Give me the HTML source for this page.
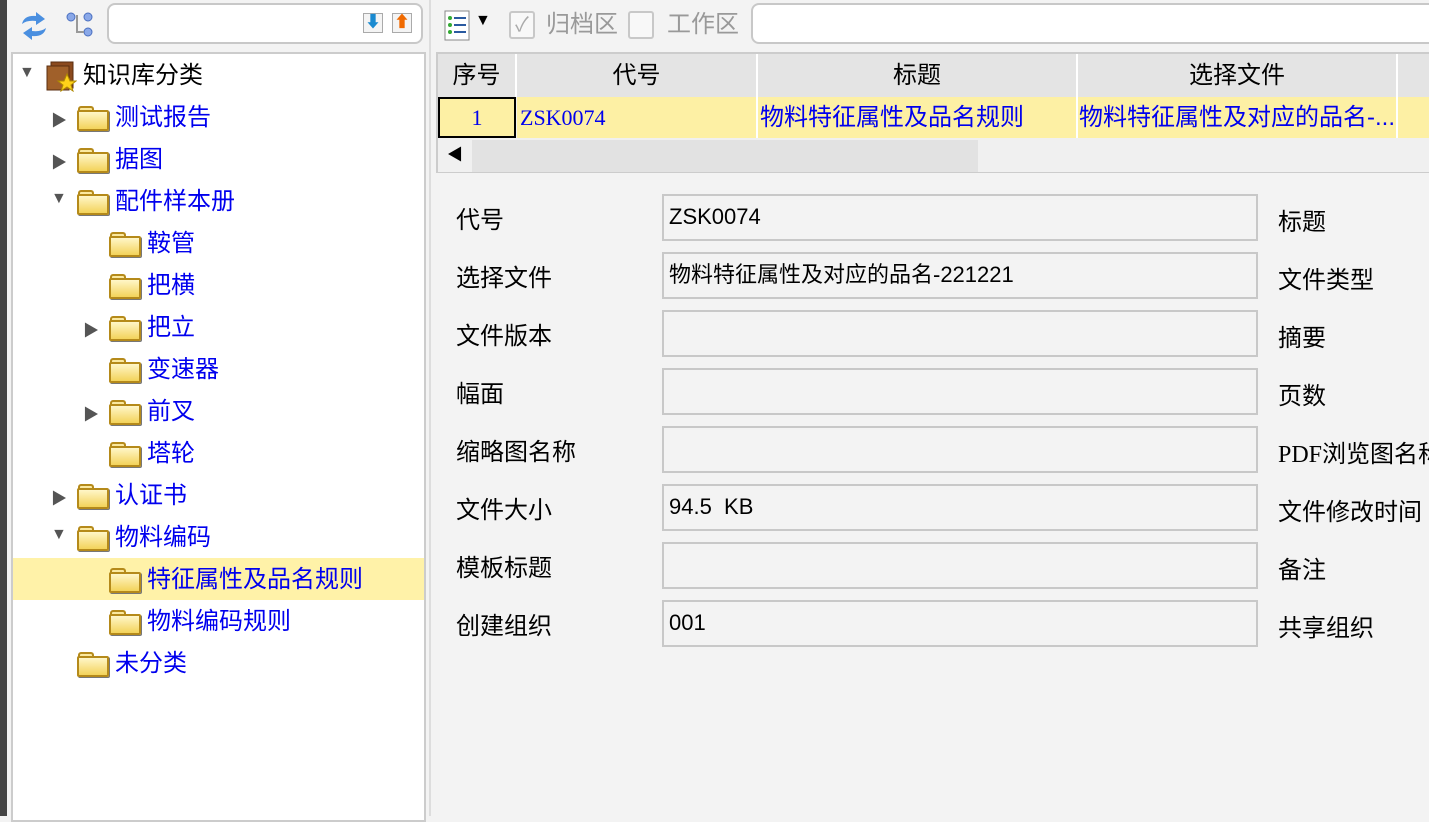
<!DOCTYPE html>
<html><head><meta charset="utf-8"><style>
*{margin:0;padding:0;box-sizing:border-box}
body{width:1429px;height:816px;overflow:hidden;background:#f3f3f3;position:relative;font-family:"Liberation Sans","WenQuanYi Zen Hei","Noto Sans CJK SC",sans-serif;font-size:24px;color:#000}
.a{position:absolute;white-space:nowrap}
.tr{position:absolute;height:42px;line-height:42px;color:#0000ee;white-space:nowrap}
.fold{display:inline-block;width:30px;height:22px;vertical-align:-3px;margin-right:8px;position:relative}
.fold:before{content:"";position:absolute;left:1px;top:0;width:12px;height:6px;border:2px solid #b58a1a;border-bottom:none;border-radius:3px 3px 0 0;background:#fbe9a0}
.fold:after{content:"";position:absolute;left:0;top:4px;width:28px;height:17px;border:2px solid #b58a1a;border-radius:2px;background:linear-gradient(#fff6c8,#f3d35a);box-shadow:1px 1px 0 #777}
.tri{position:absolute;font-size:16px;color:#555}
.lbl{position:absolute;left:456px;font-size:24px;white-space:nowrap}
.inp{position:absolute;left:662px;width:596px;height:47px;border:2px solid #c8c8c8;background:#f3f3f3;padding-left:5px;line-height:42px;font-size:22px;white-space:nowrap}
.rl{position:absolute;left:1278px;font-size:24px;white-space:nowrap}
.th{position:absolute;top:54px;height:43px;background:#e4e4e4;text-align:center;line-height:43px;border-right:2px solid #fff}
.td{position:absolute;top:97px;height:41px;background:#fdf0a4;line-height:41px;color:#0000ee;border-right:2px solid #fff;overflow:hidden;white-space:nowrap}
</style></head><body>
<div class="a" style="left:0;top:0;width:7px;height:816px;background:#444"></div>
<svg class="a" style="left:18px;top:10px" width="32" height="32" viewBox="0 0 32 32"><path d="M4 14 Q6 5 18 6 L18 2 L27 9 L18 15 L18 11 Q9 10 4 14Z" fill="#4a8fe0"/><path d="M28 18 Q26 27 14 26 L14 30 L5 23 L14 17 L14 21 Q23 22 28 18Z" fill="#4a8fe0"/></svg>
<svg class="a" style="left:64px;top:10px" width="34" height="30" viewBox="0 0 34 30"><circle cx="7" cy="7" r="4" fill="#8aa8e8" stroke="#4a6fc0"/><circle cx="24" cy="7" r="4" fill="#8aa8e8" stroke="#4a6fc0"/><circle cx="24" cy="22" r="4" fill="#8aa8e8" stroke="#4a6fc0"/><path d="M13 5v17h7" stroke="#999" fill="none" stroke-width="2"/></svg>
<div class="a" style="left:107px;top:3px;width:316px;height:41px;border:2px solid #c8c8c8;border-radius:8px;background:#fff"></div>
<div class="a" style="left:363px;top:13px;width:20px;height:20px;border:1px solid #aaa;background:#f4f4f4;color:#1a8ad0;font-size:16px;line-height:18px;text-align:center">⬇</div>
<div class="a" style="left:392px;top:13px;width:20px;height:20px;border:1px solid #aaa;background:#f4f4f4;color:#f06a00;font-size:16px;line-height:18px;text-align:center">⬆</div>
<div class="a" style="left:11px;top:52px;width:415px;height:770px;background:#fff;border:2px solid #ccc"></div>
<div class="a" style="left:13px;top:558px;width:411px;height:42px;background:#fff2a8"></div>
<div class="tri" style="left:19px;top:64px">▼</div>
<svg class="a" style="left:45px;top:60px" width="32" height="32" viewBox="0 0 32 32"><rect x="6" y="2" width="22" height="26" fill="#8b4a1e" stroke="#5a2e10"/><rect x="2" y="6" width="22" height="24" fill="#a0602a" stroke="#5a2e10"/><polygon points="22,14 25,21 31,21 26,25 28,31 22,27 16,31 18,25 13,21 19,21" fill="#ffd21a" stroke="#b08a00"/></svg>
<div class="tr" style="left:83px;top:55px;color:#000">知识库分类</div>
<div class="tri" style="left:51px;top:107px">▶</div><div class="tr" style="left:77px;top:97px"><span class="fold"></span>测试报告</div>
<div class="tri" style="left:51px;top:149px">▶</div><div class="tr" style="left:77px;top:139px"><span class="fold"></span>据图</div>
<div class="tri" style="left:51px;top:190px">▼</div><div class="tr" style="left:77px;top:181px"><span class="fold"></span>配件样本册</div>
<div class="tr" style="left:109px;top:223px"><span class="fold"></span>鞍管</div>
<div class="tr" style="left:109px;top:265px"><span class="fold"></span>把横</div>
<div class="tri" style="left:83px;top:317px">▶</div><div class="tr" style="left:109px;top:307px"><span class="fold"></span>把立</div>
<div class="tr" style="left:109px;top:349px"><span class="fold"></span>变速器</div>
<div class="tri" style="left:83px;top:401px">▶</div><div class="tr" style="left:109px;top:391px"><span class="fold"></span>前叉</div>
<div class="tr" style="left:109px;top:433px"><span class="fold"></span>塔轮</div>
<div class="tri" style="left:51px;top:485px">▶</div><div class="tr" style="left:77px;top:475px"><span class="fold"></span>认证书</div>
<div class="tri" style="left:51px;top:526px">▼</div><div class="tr" style="left:77px;top:517px"><span class="fold"></span>物料编码</div>
<div class="tr" style="left:109px;top:559px"><span class="fold"></span>特征属性及品名规则</div>
<div class="tr" style="left:109px;top:601px"><span class="fold"></span>物料编码规则</div>
<div class="tr" style="left:77px;top:643px"><span class="fold"></span>未分类</div>
<div class="a" style="left:429px;top:0;width:2px;height:816px;background:#ddd"></div>
<svg class="a" style="left:444px;top:10px" width="28" height="32" viewBox="0 0 28 32"><rect x="1" y="1" width="24" height="29" fill="#fff" stroke="#888"/><circle cx="6" cy="8" r="2" fill="#3a3"/><circle cx="6" cy="15" r="2" fill="#3a3"/><circle cx="6" cy="22" r="2" fill="#3a3"/><path d="M10 8h12M10 15h12M10 22h12" stroke="#2a5aa0" stroke-width="2"/></svg>
<div class="a" style="left:475px;top:12px;font-size:16px">▼</div>
<div class="a" style="left:509px;top:11px;width:26px;height:28px;border:2px solid #c8c8c8;border-radius:3px;background:#f8f8f8;color:#aaa;font-size:20px;line-height:24px;text-align:center">✓</div>
<div class="a" style="left:546px;top:10px;color:#999;line-height:30px">归档区</div>
<div class="a" style="left:628px;top:11px;width:26px;height:28px;border:2px solid #c8c8c8;border-radius:3px;background:#f8f8f8"></div>
<div class="a" style="left:667px;top:10px;color:#999;line-height:30px">工作区</div>
<div class="a" style="left:751px;top:3px;width:690px;height:41px;border:2px solid #c8c8c8;border-radius:8px;background:#fff"></div>
<div class="a" style="left:436px;top:52px;width:1000px;height:121px;border:2px solid #ccc;background:#f0f0f0"></div>
<div class="th" style="left:438px;width:79px">序号</div>
<div class="th" style="left:517px;width:241px">代号</div>
<div class="th" style="left:758px;width:320px">标题</div>
<div class="th" style="left:1078px;width:320px">选择文件</div>
<div class="th" style="left:1398px;width:40px"></div>
<div class="a" style="left:438px;top:97px;width:78px;height:41px;background:#fdf0a4;border:2px solid #000;text-align:center;line-height:37px;color:#0000ee;font-family:'Liberation Serif',serif;font-size:22px">1</div>
<div class="td" style="left:517px;width:241px;padding-left:3px;font-family:'Liberation Serif',serif;font-size:22px">ZSK0074</div>
<div class="td" style="left:758px;width:320px;padding-left:2px">物料特征属性及品名规则</div>
<div class="td" style="left:1078px;width:320px;padding-left:1px">物料特征属性及对应的品名-...</div>
<div class="td" style="left:1398px;width:40px"></div>
<div class="a" style="left:438px;top:140px;width:1000px;height:32px;background:#e2e2e2"></div>
<div class="a" style="left:438px;top:140px;width:34px;height:32px;background:#f0f0f0;font-size:16px;line-height:32px;text-align:center">◀</div>
<div class="a" style="left:978px;top:140px;width:460px;height:32px;background:#f0f0f0"></div>
<div class="lbl" style="top:200px">代号</div><div class="inp" style="top:194px">ZSK0074</div><div class="rl" style="top:202px">标题</div>
<div class="lbl" style="top:258px">选择文件</div><div class="inp" style="top:252px">物料特征属性及对应的品名-221221</div><div class="rl" style="top:260px">文件类型</div>
<div class="lbl" style="top:316px">文件版本</div><div class="inp" style="top:310px"></div><div class="rl" style="top:318px">摘要</div>
<div class="lbl" style="top:374px">幅面</div><div class="inp" style="top:368px"></div><div class="rl" style="top:376px">页数</div>
<div class="lbl" style="top:432px">缩略图名称</div><div class="inp" style="top:426px"></div><div class="rl" style="top:434px"><span style="font-family:'Liberation Serif',serif">PDF</span>浏览图名称</div>
<div class="lbl" style="top:490px">文件大小</div><div class="inp" style="top:484px">94.5&nbsp; KB</div><div class="rl" style="top:492px">文件修改时间</div>
<div class="lbl" style="top:548px">模板标题</div><div class="inp" style="top:542px"></div><div class="rl" style="top:550px">备注</div>
<div class="lbl" style="top:606px">创建组织</div><div class="inp" style="top:600px">001</div><div class="rl" style="top:608px">共享组织</div>
</body></html>
